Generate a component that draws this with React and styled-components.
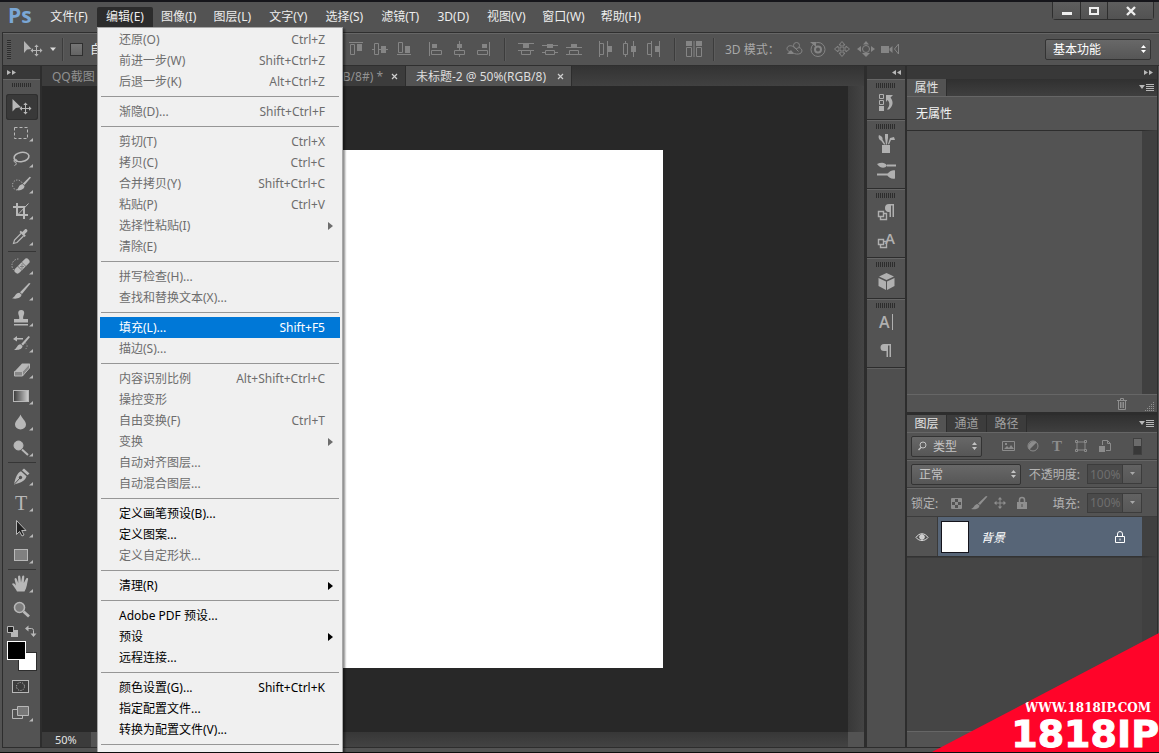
import React from "react";
import styled, { createGlobalStyle, css } from "styled-components";

const GlobalStyle = createGlobalStyle`
  * {
    box-sizing: border-box;
  }

  body {
    margin: 0;
    background: #535353;
  }

  body, button, input, select {
    font-family: "Noto Sans", "Noto Sans CJK SC", sans-serif;
    font-size: 12px;
  }

  button {
    margin: 0;
    padding: 0;
    border: none;
    background: none;
    color: inherit;
  }
`;

const Window = styled.div`
  position: relative;
  display: flex;
  flex-direction: column;
  height: 100vh;
  overflow: hidden;
  color: #dcdcdc;
  background: #535353;
  border-top: 2px solid #15151a;
  border-bottom: 1px solid #0c0c0c;
`;

/* ---------- title bar ---------- */

const TitleBar = styled.header`
  display: flex;
  align-items: flex-start;
  height: 30px;
`;

const Logo = styled.div`
  width: 41px;
  padding-left: 8px;
  font-family: "Open Sans", sans-serif;
  font-size: 21px;
  font-weight: 700;
  line-height: 27px;
  color: #7ba7d6;
`;

const MenuBar = styled.nav`
  display: flex;
  padding-top: 5px;
`;

const MenuSlot = styled.div`
  position: relative;
`;

const MenuButton = styled.button`
  display: block;
  min-width: ${({ $slim }) => ($slim ? "50px" : "56px")};
  height: 20px;
  padding: 0 8px;
  line-height: 18px;
  color: #ededed;
  white-space: nowrap;
  background: ${({ $open }) => ($open ? "#2c2c2c" : "none")};
  border-radius: 2px 2px 0 0;
`;

const WindowControls = styled.div`
  display: flex;
  margin: 0 5px 0 auto;
  border: 1px solid #2e2e2e;
  border-top: none;
  border-radius: 0 0 4px 4px;
`;

const WindowButton = styled.button`
  display: flex;
  align-items: center;
  justify-content: center;
  width: ${({ $wide }) => ($wide ? "46px" : "27px")};
  height: 17px;
  background: linear-gradient(#5e5e5e, #525252);

  & + & {
    border-left: 1px solid #2e2e2e;
  }
`;

/* ---------- drop-down menu ---------- */

const Menu = styled.div`
  position: absolute;
  z-index: 5;
  top: 20px;
  left: 0;
  width: 246px;
  padding: 1px 2px 24px;
  background: #f0f0f0;
  border: 1px solid #a8a8a8;
  box-shadow: 2px 2px 2px rgba(0, 0, 0, 0.45);
`;

const MenuItem = styled.button`
  display: flex;
  align-items: center;
  justify-content: space-between;
  width: 100%;
  height: 21px;
  padding: 0 15px 0 19px;
  line-height: 20px;
  text-align: left;
  white-space: nowrap;
  color: #000;

  &:disabled {
    color: #6d6d6d;
  }

  ${({ $selected }) =>
    $selected &&
    css`
      color: #fff;
      background: #0078d7;
    `}
`;

const Submenu = styled.span`
  width: 0;
  height: 0;
  margin-right: -8px;
  border: 4px solid transparent;
  border-left: 5px solid currentColor;
  border-right: none;
`;

const MenuLine = styled.hr`
  height: 1px;
  margin: 4px 1px;
  border: none;
  background: #969696;
`;

/* ---------- options bar ---------- */

const OptionsBar = styled.div`
  display: flex;
  align-items: center;
  gap: 11px;
  height: 34px;
  margin-left: 2px;
  padding-right: 8px;
  border: 1px solid #2f2f2f;
  border-right: none;
  box-shadow: inset 0 1px #666;
`;

const ToolOptions = styled.div`
  display: flex;
  align-items: center;
  width: 332px;
  padding-left: 4px;
  white-space: nowrap;
`;

const SideGrip = styled.span`
  width: 4px;
  height: 19px;
  margin-right: 13px;
  background: repeating-linear-gradient(#2d2d2d 0 1px, #5a5a5a 1px 2px);
`;

const Divider = styled.span`
  width: 1px;
  height: 23px;
  background: #3c3c3c;
  box-shadow: 1px 0 #5c5c5c;
`;

const CheckLabel = styled.label`
  display: flex;
  align-items: center;
  gap: 7px;
  margin-left: 7px;
  color: #ededed;
`;

const Check = styled.input`
  appearance: none;
  width: 13px;
  height: 13px;
  margin: 0;
  border: 1px solid #2f2f2f;
  background: linear-gradient(#757575, #646464);
`;

const IconSet = styled.div`
  display: flex;
  gap: 4px;
  color: #858585;
`;

const IconButton = styled.button`
  display: flex;
  align-items: center;
  justify-content: center;
`;

const ModeLabel = styled.span`
  width: 48px;
  color: #a8a8a8;
  white-space: nowrap;
`;

const SelectBox = styled.span`
  position: relative;
  display: inline-flex;
  width: ${({ $width }) => $width}px;
  margin-left: ${({ $end }) => ($end ? "auto" : 0)};
  color: ${({ $bright }) => ($bright ? "#fff" : "#c4c4c4")};

  svg {
    position: absolute;
    top: 50%;
    transform: translateY(-50%);
    pointer-events: none;
  }

  svg:last-child {
    right: 4px;
  }
`;

const Select = styled.select`
  appearance: none;
  width: 100%;
  height: 21px;
  padding: 0 14px 0 ${({ $indent }) => $indent || 7}px;
  color: inherit;
  background: linear-gradient(#686868, #565656);
  border: 1px solid #333;
  border-radius: 2px;
`;

/* ---------- workspace ---------- */

const Workspace = styled.main`
  display: flex;
  flex: 1;
  min-height: 0;
  margin: 0 1px 0 2px;
  background: #2d2d2d;
  border-left: 1px solid #2d2d2d;
  border-right: 1px solid #2d2d2d;
  border-bottom: 1px solid #2d2d2d;
`;

const Frame = styled.div`
  height: 4px;
  background: #535353;
`;

const Collapser = styled.div`
  display: flex;
  align-items: center;
  justify-content: ${({ $left }) => ($left ? "flex-start" : "flex-end")};
  height: 13px;
  padding: 0 4px;
  color: #b8b8b8;
  background: #383838;
`;

const Tools = styled.aside`
  display: flex;
  flex-direction: column;
  width: 37px;
  margin-right: 2px;
`;

const ToolList = styled.div`
  display: flex;
  flex: 1;
  flex-direction: column;
  align-items: center;
  color: #b8b8b8;
  background: #535353;
  border-top: 1px solid #666;
`;

const TopGrip = styled.span`
  width: 20px;
  height: 4px;
  background: repeating-linear-gradient(90deg, #2d2d2d 0 1px, #535353 1px 2px);
`;

const ToolGrip = styled(TopGrip)`
  margin: 3px 0 7px;
`;

const ToolButton = styled.button`
  position: relative;
  width: 32px;
  height: 26px;

  svg {
    display: block;
  }

  ${({ $active }) =>
    $active &&
    css`
      background: #393939;
      border-radius: 3px;
      box-shadow: inset 0 0 0 1px #2f2f2f;
    `}
`;

const ToolLine = styled.hr`
  width: 28px;
  height: 1px;
  margin: 1px 0;
  border: none;
  background: #363636;
`;

const SwatchTools = styled.div`
  display: flex;
  justify-content: space-between;
  width: 30px;
  height: 14px;
  padding-top: 2px;
`;

const Swatches = styled.div`
  position: relative;
  width: 30px;
  height: 30px;
  margin: 4px 0 3px;
`;

const Swatch = styled.button`
  position: absolute;
  width: 19px;
  height: 19px;
  border: 1px solid #2d2d2d;

  &:first-child {
    right: 0;
    bottom: 0;
    background: #fff;
  }

  &:last-child {
    top: 0;
    left: 0;
    background: #000;
    border-color: #fff;
  }
`;

const Document = styled.section`
  display: flex;
  flex: 1;
  flex-direction: column;
  min-width: 0;
`;

const Tabs = styled.div`
  display: flex;
  height: 20px;
  background: linear-gradient(#333, #414141);
`;

const Tab = styled.button`
  display: flex;
  align-items: center;
  justify-content: space-between;
  width: ${({ $active }) => ($active ? "166px" : "364px")};
  padding: 0 7px 0 10px;
  color: ${({ $active }) => ($active ? "#dedede" : "#919191")};
  background: ${({ $active }) => ($active ? "#535353" : "#3c3c3c")};
  border-right: 1px solid #2d2d2d;
  white-space: nowrap;
`;

const TabEnd = styled.span`
  display: flex;
  align-items: center;
  gap: 8px;
`;

const Stage = styled.div`
  display: grid;
  flex: 1;
  grid-template: minmax(0, 1fr) 15px / minmax(0, 1fr) 16px;
  background: #282828;
`;

const Viewport = styled.div`
  display: flex;
  align-items: center;
  justify-content: center;
`;

const Paper = styled.div`
  width: 436px;
  height: 518px;
  background: #fff;
`;

const ScrollTrack = styled.div`
  background: linear-gradient(90deg, #383838, #444);
`;

const StatusBar = styled.footer`
  display: flex;
  background: linear-gradient(#373737, #434343);
`;

const ZoomLevel = styled.input`
  width: 49px;
  padding: 0 0 0 13px;
  color: #e4e4e4;
  font-size: 11px;
  background: #3b3b3b;
  border: none;
`;

const StatusInfo = styled.div`
  width: 230px;
  background: #535353;
`;

const Corner = styled.div`
  background: #535353;
`;

/* ---------- icon dock ---------- */

const Dock = styled.aside`
  display: flex;
  flex-direction: column;
  width: 38px;
  margin: 0 2px 0 3px;
`;

const DockGroup = styled.div`
  display: flex;
  flex-direction: column;
  align-items: center;
  padding: 3px 0;
  color: #b0b0b0;
  background: #535353;
  border-top: 1px solid #666;
  border-bottom: 1px solid #2d2d2d;
`;

const DockGrip = styled(TopGrip)`
  height: 5px;
`;

const DockButton = styled(IconButton)`
  width: 30px;
  height: 28px;
`;

const DockRest = styled.div`
  flex: 1;
  background: #4f4f4f;
  border-top: 1px solid #606060;
`;

/* ---------- panels ---------- */

const Panels = styled.aside`
  display: flex;
  flex-direction: column;
  width: 250px;
`;

const Panel = styled.section`
  display: flex;
  flex-direction: column;
  flex: ${({ $grow }) => ($grow ? "1" : "0 0 auto")};
  margin-bottom: ${({ $grow }) => ($grow ? 0 : "3px")};
  min-height: 0;
`;

const PanelTabs = styled.div`
  display: flex;
  align-items: stretch;
  height: 17px;
  background: linear-gradient(#303030, #3f3f3f);
`;

const PanelTab = styled.button`
  width: 40px;
  height: 18px;
  line-height: 16px;
  color: ${({ $active }) => ($active ? "#e4e4e4" : "#a0a0a0")};
  background: ${({ $active }) => ($active ? "#535353" : "#3c3c3c")};
  border-right: 1px solid #2d2d2d;
`;

const PanelMenu = styled(IconButton)`
  margin: 0 3px 0 auto;
  color: #b8b8b8;
`;

const PanelMessage = styled.p`
  height: 34px;
  margin: 0;
  padding-left: 9px;
  line-height: 34px;
  color: #f4f4f4;
  background: #535353;
  border-top: 1px solid #666;
`;

const ScrollBody = styled.div`
  flex: ${({ $height }) => ($height ? "none" : "1")};
  height: ${({ $height }) => ($height ? `${$height}px` : "auto")};
  background: ${({ $height }) => ($height ? "#535353" : "#454545")};
  border-top: 1px solid ${({ $height }) => ($height ? "#2d2d2d" : "#3a3a3a")};
  border-right: 15px solid #404040;
`;

const PanelFooter = styled.div`
  display: flex;
  align-items: center;
  justify-content: flex-end;
  gap: 15px;
  height: ${({ $short }) => ($short ? "16px" : "18px")};
  padding-right: 2px;
  color: #8f8f8f;
  background: #535353;
  border-top: 1px solid #666;
`;

const ControlRow = styled.div`
  display: flex;
  align-items: center;
  height: ${({ $last }) => ($last ? "29px" : "28px")};
  padding: 0 15px 0 4px;
  color: #b4b4b4;
  background: #535353;
  border-top: 1px solid #666;
  border-bottom: 1px solid #3c3c3c;
  white-space: nowrap;
`;

const FilterIcons = styled.div`
  display: flex;
  gap: 8px;
  margin-left: 19px;
  color: #8c8c8c;
`;

const FilterSwitch = styled.button`
  width: 9px;
  height: 17px;
  margin: 0 0 0 auto;
  background: linear-gradient(#6b6b6b 0 7px, #383838 7px);
  border: 1px solid #404040;
`;

const AmountLabel = styled.label`
  display: flex;
  align-items: center;
  gap: 7px;
  margin-left: auto;
`;

const Amount = styled.input`
  width: 36px;
  height: 20px;
  padding: 0 0 0 2px;
  color: #6e6e6e;
  background: #4a4a4a;
  border: 1px solid #3c3c3c;
`;

const AmountArrow = styled(IconButton)`
  width: 19px;
  height: 20px;
  color: #a8a8a8;
  background: linear-gradient(#626262, #575757);
  border: 1px solid #3c3c3c;
  border-left: none;
`;

const LockIcons = styled.div`
  display: flex;
  gap: 4px;
  margin-left: 8px;
  color: #8f8f8f;
`;

const Layer = styled.div`
  display: flex;
  height: 40px;
  background: #535353;
  border-right: 15px solid #404040;
  border-bottom: 1px solid #333;
`;

const Eye = styled(IconButton)`
  width: 31px;
  border-right: 1px solid #3a3a3a;
`;

const LayerBody = styled.div`
  display: flex;
  flex: 1;
  align-items: center;
  padding: 0 16px 0 3px;
  color: #fff;
  background: #576577;
`;

const Thumb = styled.span`
  width: 28px;
  height: 32px;
  margin-right: 12px;
  background: #fff;
  border: 1px solid #14141c;
`;

const LayerName = styled.span`
  flex: 1;
  font-style: italic;
`;

/* ---------- corner ribbon ---------- */

const Ribbon = styled.a`
  position: absolute;
  z-index: 6;
  right: 0;
  bottom: -1px;
  display: flex;
  flex-direction: column;
  align-items: flex-end;
  justify-content: flex-end;
  width: 229px;
  height: 120px;
  color: #fff;
  text-decoration: none;
  background: #ff0429;
  clip-path: polygon(100% 0, 100% 100%, 0 100%);
`;

const RibbonSite = styled.span`
  padding-right: 8px;
  font-family: "DejaVu Serif", serif;
  font-size: 12px;
  font-weight: 700;
  line-height: 14px;
`;

const RibbonName = styled.span`
  font-family: "DejaVu Sans", sans-serif;
  font-size: 38px;
  font-weight: 700;
  line-height: 38px;
  -webkit-text-stroke: 1px #fff;
`;

/* ---------- icons ---------- */

const Svg = ({ w = 20, h = w, children }) => (
  <svg width={w} height={h} viewBox={`0 0 ${w} ${h}`} fill="none" stroke="currentColor" aria-hidden="true">
    {children}
  </svg>
);

const Solid = (props) => <path fill="currentColor" stroke="none" {...props} />;

const Cross = ({ x, y }) => (
  <g transform={`translate(${x} ${y})`}>
    <path d="M-4 0H4M0-4V4" />
    <Solid d="M0-6l2.2 2.5h-4.4zM0 6l2.2-2.5h-4.4zM-6 0l2.5-2.2v4.4zM6 0l-2.5-2.2v4.4z" />
  </g>
);

const MoveIcon = () => (
  <>
    <Solid d="M6.5 5v12.5l3.4-3.6 5.1-.6z" />
    <Cross x={19.5} y={14.5} />
  </>
);

const toolGroups = [
  [
    { name: "移动工具", single: true, icon: <MoveIcon /> },
    { name: "矩形选框工具", icon: <rect x="8.5" y="7.5" width="13" height="11" strokeDasharray="3 2" /> },
    {
      name: "套索工具",
      icon: (
        <>
          <ellipse cx="15.5" cy="11" rx="7.5" ry="4.6" strokeWidth="1.6" transform="rotate(-10 15.5 11)" />
          <circle cx="9.5" cy="14.8" r="1.5" />
          <path d="M9.5 16.5c1.5 1 .5 2.5-1 3" />
        </>
      ),
    },
    {
      name: "快速选择工具",
      icon: (
        <>
          <circle cx="11.5" cy="13" r="5" strokeDasharray="1.2 1.5" />
          <Solid d="M25 5.5l-6.5 7.5-1.8-1.3 7-7zM16 12.200l2.500 1.600c0 3.500-4 5.200-8 4.200 2-1.200 2-5 5.500-5.800z" />
        </>
      ),
    },
    {
      name: "裁剪工具",
      icon: (
        <>
          <path d="M11 5v12h11M7 9h11v12" strokeWidth="2" />
          <path d="M12 16.5L22.5 5.5" />
        </>
      ),
    },
    {
      name: "吸管工具",
      icon: (
        <>
          <path d="M15 9.5l-6.5 6.5-1 3.5 3.5-1 6.5-6.5" strokeWidth="1.2" />
          <Solid d="M13.5 8l1.3-1.3 1.5 1.2 2.5-2.5c1.5-1.2 3.5.8 2.3 2.3l-2.5 2.5 1.2 1.5-1.3 1.3z" />
        </>
      ),
    },
  ],
  [
    {
      name: "污点修复画笔工具",
      icon: (
        <>
          <path d="M10 18.5a6.5 6.5 0 013-12.5" strokeDasharray="1.2 1.5" />
          <path d="M11.5 17.5L20.500 8.500" strokeWidth="6" strokeLinecap="round" />
          <path d="M11.5 13l5 5M15.500 9l5 5" stroke="#666" strokeWidth="0.8" />
          <path d="M14.500 13.500h1M16.500 13.500h1M15.500 12h1M15.500 15h1" stroke="#444" />
        </>
      ),
    },
    {
      name: "画笔工具",
      icon: <Solid d="M24.5 4.5L16 15l-2-1.7L23 4zM13.3 13.8l2.200 1.800c0 3.500-5 4.700-9.500 3.700 3-.8 3.300-5.500 7.300-5.500z" />,
    },
    {
      name: "仿制图章工具",
      icon: <Solid d="M12.2 8a3 3 0 116 0c0 2-1.5 3-1 6H22v3.5H8V14h5.2c.5-3-1-4-1-6zM8 19h14v1.5H8z" />,
    },
    {
      name: "历史记录画笔工具",
      icon: (
        <>
          <Solid d="M24 6l-7 8.5-1.8-1.5L22.5 5zM14.5 13.3l2 1.700c0 3-4 4.500-8.500 3.700 3-1 3-5 6.500-5.400zM7 8l4-3v2h6v1.500h-6v2z" />
          <path d="M19.500 12c2.500 2 2 5-1 7" strokeDasharray="1 2" />
        </>
      ),
    },
    {
      name: "橡皮擦工具",
      icon: (
        <>
          <Solid d="M8.5 14.5L16 6.5h8l-7 8z" />
          <path d="M8.5 14.5h8V19h-8zM16.5 14.5L23.5 7v4l-7 8z" fill="#888" />
        </>
      ),
    },
    {
      name: "渐变工具",
      icon: (
        <>
          <defs>
            <linearGradient id="tool-ramp">
              <stop offset="0" stopColor="#3a3a3a" />
              <stop offset="1" stopColor="#d0d0d0" />
            </linearGradient>
          </defs>
          <rect x="7.5" y="7.5" width="15" height="11" fill="url(#tool-ramp)" />
        </>
      ),
    },
    { name: "模糊工具", icon: <Solid d="M14.500 5.500c1.500 4 5.500 6.500 5.500 10a5.500 5 0 01-11 0c0-3.500 4-6 5.500-10z" /> },
    {
      name: "减淡工具",
      icon: (
        <>
          <circle cx="12.5" cy="10.5" r="4.5" fill="currentColor" />
          <path d="M16 14.5l6 5.5" strokeWidth="2" />
        </>
      ),
    },
  ],
  [
    {
      name: "钢笔工具",
      icon: (
        <>
          <Solid d="M18 4.5l5.5 5-2 1.8-5.5-5zM15 7.2l5.5 5c-1 4-5 6.5-12.500 8.300 1.500-7 3-11.500 7-13.300z" />
          <path d="M8.5 20l5.5-6" stroke="#535353" />
          <circle cx="14.5" cy="13.5" r="1.2" fill="#535353" stroke="#444" />
        </>
      ),
    },
    {
      name: "横排文字工具",
      icon: (
        <text x="15" y="20" textAnchor="middle" fill="currentColor" stroke="none" fontFamily="Liberation Serif" fontSize="20">
          T
        </text>
      ),
    },
    { name: "路径选择工具", icon: <path d="M10.5 4.5v14l3-3 2.5 4.5 2-1-2.300-4.500h4.300z" fill="#222" /> },
    { name: "矩形工具", icon: <rect x="8.5" y="7.5" width="13" height="11" fill="#808080" /> },
  ],
  [
    {
      name: "抓手工具",
      icon: (
        <Solid d="M11 20.5c-1-2.500-3-4.500-5-7.500 1-1.500 2.500-.5 4 1.500L8.500 8c.5-1.500 1.800-1.200 2.200 0l1.600 4L12 5.500c.5-1.300 2-1.300 2.300 0l.7 6 1.200-6.300c.6-1.200 2-.8 2.100.4L17.800 12l2.400-4.500c.9-1 2.100-.3 1.900.8C21 12 21 17 18.500 20.500z" />
      ),
    },
    {
      name: "缩放工具",
      single: true,
      icon: (
        <>
          <circle cx="13.5" cy="10.5" r="5" fill="#7c7c7c" strokeWidth="1.6" />
          <path d="M17.5 14.5l5.5 5" strokeWidth="2.8" />
        </>
      ),
    },
  ],
];

const Fly = () => <Solid d="M27 18v3.500h-4z" />;

const MenuGlyph = () => (
  <Svg w={15} h={12}>
    <Solid d="M0 3h6l-3 4z" />
    <path d="M7 2.5h8M7 4.5h8M7 6.5h8M7 8.5h8" />
  </Svg>
);

const Updown = () => (
  <Svg w={7} h={10}>
    <Solid d="M1 4l2.500-3L6 4zM1 6l2.500 3L6 6z" />
  </Svg>
);

const Chevrons = ({ back }) => (
  <Svg w={9} h={7}>
    <Solid d={back ? "M4 1v5L0 3.5zM9 1v5L5 3.5z" : "M0 1v5l4-2.500zM5 1v5l4-2.500z"} />
  </Svg>
);

const Close = () => (
  <Svg w={7}>
    <path d="M1 1l5 5M6 1L1 6" stroke="#cfcfcf" strokeWidth="1.2" />
  </Svg>
);

const Padlock = () => (
  <Svg w={12} h={14}>
    <path d="M3.5 6V4a2.5 2.500 0 015 0v2M1.500 6.500h9v6h-9z" />
    <path d="M6 8.5v2" />
  </Svg>
);

/* filled (f) and outlined (o) boxes with guide lines (l) */
const alignSets = [
  [
    { name: "顶对齐", l: "M3 3.5h14", f: "M11 5h5v7h-5z", o: "M4.5 5.5h4v10h-4z" },
    { name: "垂直居中对齐", l: "M2 10.5h2M9 10.5h9", f: "M11 7h5v7h-5z", o: "M4.5 4.5h4v11h-4z" },
    { name: "底对齐", l: "M3 15.5h14", f: "M11 7h5v7h-5z", o: "M4.5 3.5h4v10h-4z" },
  ],
  [
    { name: "左对齐", l: "M4.5 3v14", f: "M7 5h5v4H7z", o: "M6.5 11.5h10v4h-10z" },
    { name: "水平居中对齐", l: "M10.5 2v9M10.5 15v3", f: "M8 5h5v4H8z", o: "M5.5 11.5h10v4h-10z" },
    { name: "右对齐", l: "M16.5 3v14", f: "M9 5h5v4H9z", o: "M4.5 11.5h10v4h-10z" },
  ],
  [
    { name: "按顶分布", l: "M2 4.5h16M2 11.5h16", f: "M7 5h6v4H7z", o: "M5.5 11.5h9v4h-9z" },
    { name: "垂直居中分布", l: "M2 6.5h16M2 13.5h3M15 13.5h3", f: "M7 5h6v4H7z", o: "M5.5 11.5h9v4h-9z" },
    { name: "按底分布", l: "M2 8.5h16M2 15.5h16", f: "M7 5h6v4H7z", o: "M5.5 11.5h9v4h-9z" },
  ],
  [
    { name: "按左分布", l: "M4.5 2v16M12.5 2v16", f: "M13 7h4v6h-4z", o: "M4.5 4.5h4v11h-4z" },
    { name: "水平居中分布", l: "M6.5 2v3M6.5 15v3M14.5 2v16", f: "M12 7h5v6h-5z", o: "M4.5 4.5h4v11h-4z" },
    { name: "按右分布", l: "M8.5 2v16M16.5 2v16", f: "M12 7h4v6h-4z", o: "M4.5 4.5h4v11h-4z" },
  ],
];

const modes3d = [
  {
    name: "旋转",
    icon: (
      <>
        <path d="M8 12.500c-4 .5-6-2-4.500-4.500 1.500-2 5-1.500 7 .5l4 4" />
        <circle cx="12.500" cy="6.500" r="3" />
        <path d="M15 8.500c4 1 4 6-.5 6.500-3 .3-5-.5-6.500-2" />
        <Solid d="M3 15h7l-3-4z" />
      </>
    ),
  },
  {
    name: "滚动",
    icon: (
      <>
        <circle cx="10" cy="10.500" r="7" />
        <circle cx="10" cy="10.500" r="3" strokeWidth="2" />
        <Solid d="M2 3h6v5z" />
      </>
    ),
  },
  { name: "拖动", icon: <path d="M10 2.500l3 3.500h-2v3h3V7l3.500 3-3.500 3v-2h-3v3h2l-3 3.500L7 14h2v-3H6v2l-3.500-3L6 7v2h3V6H7z" /> },
  {
    name: "滑动",
    icon: (
      <>
        <circle cx="10" cy="10" r="3.500" />
        <Solid d="M10 2l3 3.500H7zM10 18l4-4H6zM1 10l4-3v6zM19 10l-4-3v6z" />
      </>
    ),
  },
  {
    name: "缩放",
    icon: (
      <>
        <Solid d="M1 7h8v7H1zM9.500 9.500l3-2.500v7l-3-2.500z" />
        <path d="M18.500 5L14.500 10l4 5z" />
      </>
    ),
  },
];

const dockGroups = [
  [
    {
      name: "历史记录",
      icon: (
        <>
          <path d="M3.500 2.500h4v4h-4zM3.500 8.500h4v4h-4z" />
          <Solid d="M3 14h5v5H3zM10 3h7l-2.500 2.500c3 4 3 8-1.500 12h-2c3-4 3-7 .5-9.500L10 10z" />
        </>
      ),
    },
  ],
  [
    {
      name: "画笔预设",
      icon: <Solid d="M6 12h8v8H6zM3 2c3 1 4 3 3.500 4.500l3 5H8L5 7.500C3 7 2 4 3 2zM9 1h3v4l-1 6.500h-1L9 5zM12 11l2-6 4-1 1 3-4 0-2 4.500z" />,
    },
    {
      name: "画笔",
      icon: (
        <>
          <Solid d="M1 3c4-2 8-2 10 1.500-2 3-6 3.500-10-1.500zM11 13.500c2-4 7-5 8-4v8c-3 1-7-1-8-4z" />
          <path d="M11 4.500h9M1 13.500h11" strokeWidth="2" />
        </>
      ),
    },
  ],
  [
    {
      name: "段落样式",
      icon: (
        <>
          <path d="M2.500 9.500h5v5h-5zM4.500 14.500v3h6v-6h-3" strokeWidth="1.400" />
          <Solid d="M13 2h5v13h-1.500V3.500H15V15h-1.500v-5H12a4 4 0 01-3-4 4 4 0 014-4z" />
        </>
      ),
    },
    {
      name: "字符样式",
      icon: (
        <>
          <path d="M2.500 9.500h5v5h-5zM4.500 14.500v3h6v-6h-3" strokeWidth="1.400" />
          <text x="9" y="14" fill="currentColor" stroke="none" fontFamily="Open Sans" fontSize="15" fontWeight="600">
            A
          </text>
        </>
      ),
    },
  ],
  [{ name: "3D", icon: <Solid d="M10.500 2L18 5.500 10.500 9 3 5.500zM2.500 7l7.500 3.500V19l-7.500-4zM18.500 7L11 10.500V19l7.500-4z" /> }],
  [
    {
      name: "字符",
      icon: (
        <>
          <text x="3" y="16" fill="currentColor" stroke="none" fontFamily="Open Sans" fontSize="16" fontWeight="600">
            A
          </text>
          <path d="M16.500 2v16" />
        </>
      ),
    },
    { name: "段落", icon: <Solid d="M8 4h7v13h-1.500V5.500H12V17h-1.500v-6H8a3.500 3.500 0 010-7z" /> },
  ],
];

const layerFilters = [
  {
    name: "像素图层",
    icon: (
      <>
        <path d="M1.500 3.500h12v9h-12z" />
        <Solid d="M3 11l3-3 2 2 2-3 3 4zM4 5h2v2H4z" />
      </>
    ),
  },
  {
    name: "调整图层",
    icon: (
      <>
        <circle cx="8" cy="8" r="5" />
        <Solid d="M4.500 11.500a5 5 0 017-7z" />
      </>
    ),
  },
  {
    name: "文字图层",
    icon: (
      <text x="8" y="13" textAnchor="middle" fill="currentColor" stroke="none" fontFamily="Liberation Serif" fontSize="15" fontWeight="700">
        T
      </text>
    ),
  },
  { name: "形状图层", icon: <path d="M4 4h8v8H4zM2.500 2.500h2v2h-2zM11.500 2.500h2v2h-2zM2.500 11.500h2v2h-2zM11.500 11.500h2v2h-2z" /> },
  {
    name: "智能对象",
    icon: (
      <>
        <path d="M5.500 7V2.500h5l3 3v7H9M10.500 2.500v3h3" />
        <Solid d="M2 8h6v6H2z" />
      </>
    ),
  },
];

/* ---------- content ---------- */

const menus = ["文件(F)", "编辑(E)", "图像(I)", "图层(L)", "文字(Y)", "选择(S)", "滤镜(T)", "3D(D)", "视图(V)", "窗口(W)", "帮助(H)"];

const slimMenus = ["图像(I)", "3D(D)"];

const editMenu = [
  [
    { label: "还原(O)", keys: "Ctrl+Z", off: true },
    { label: "前进一步(W)", keys: "Shift+Ctrl+Z", off: true },
    { label: "后退一步(K)", keys: "Alt+Ctrl+Z", off: true },
  ],
  [{ label: "渐隐(D)...", keys: "Shift+Ctrl+F", off: true }],
  [
    { label: "剪切(T)", keys: "Ctrl+X", off: true },
    { label: "拷贝(C)", keys: "Ctrl+C", off: true },
    { label: "合并拷贝(Y)", keys: "Shift+Ctrl+C", off: true },
    { label: "粘贴(P)", keys: "Ctrl+V", off: true },
    { label: "选择性粘贴(I)", sub: true, off: true },
    { label: "清除(E)", off: true },
  ],
  [
    { label: "拼写检查(H)...", off: true },
    { label: "查找和替换文本(X)...", off: true },
  ],
  [
    { label: "填充(L)...", keys: "Shift+F5", selected: true },
    { label: "描边(S)...", off: true },
  ],
  [
    { label: "内容识别比例", keys: "Alt+Shift+Ctrl+C", off: true },
    { label: "操控变形", off: true },
    { label: "自由变换(F)", keys: "Ctrl+T", off: true },
    { label: "变换", sub: true, off: true },
    { label: "自动对齐图层...", off: true },
    { label: "自动混合图层...", off: true },
  ],
  [{ label: "定义画笔预设(B)..." }, { label: "定义图案..." }, { label: "定义自定形状...", off: true }],
  [{ label: "清理(R)", sub: true }],
  [{ label: "Adobe PDF 预设..." }, { label: "预设", sub: true }, { label: "远程连接..." }],
  [{ label: "颜色设置(G)...", keys: "Shift+Ctrl+K" }, { label: "指定配置文件..." }, { label: "转换为配置文件(V)..." }],
];

const EditMenu = () => (
  <Menu role="menu">
    {editMenu.map((group) => (
      <React.Fragment key={group[0].label}>
        {group.map((item) => (
          <MenuItem key={item.label} role="menuitem" disabled={item.off} $selected={item.selected}>
            <span>{item.label}</span>
            {item.keys && <span>{item.keys}</span>}
            {item.sub && <Submenu />}
          </MenuItem>
        ))}
        <MenuLine />
      </React.Fragment>
    ))}
  </Menu>
);

const Header = () => (
  <TitleBar>
    <Logo>Ps</Logo>
    <MenuBar>
      {menus.map((label) => {
        const open = label === "编辑(E)";
        return (
          <MenuSlot key={label}>
            <MenuButton $open={open} $slim={slimMenus.includes(label)} aria-expanded={open}>
              {label}
            </MenuButton>
            {open && <EditMenu />}
          </MenuSlot>
        );
      })}
    </MenuBar>
    <WindowControls>
      <WindowButton aria-label="最小化">
        <Svg w={12}>
          <path d="M1 8.500h10" stroke="#eee" strokeWidth="3" />
        </Svg>
      </WindowButton>
      <WindowButton aria-label="最大化">
        <Svg w={12}>
          <path d="M2 3h8v6H2z" stroke="#eee" strokeWidth="2" />
        </Svg>
      </WindowButton>
      <WindowButton $wide aria-label="关闭">
        <Svg w={12}>
          <path d="M2 2l8 8M10 2l-8 8" stroke="#eee" strokeWidth="2.400" />
        </Svg>
      </WindowButton>
    </WindowControls>
  </TitleBar>
);

const Options = () => (
  <OptionsBar>
    <ToolOptions>
      <SideGrip />
      <Svg w={38} h={22}>
        <g color="#b4b4b4" stroke="currentColor">
          <Solid d="M0 3v12l3-3.500 4.500-.5z" />
          <Cross x={12.5} y={12.5} />
        </g>
        <Solid d="M26 9.500h6l-3 3.500z" />
      </Svg>
      <Divider />
      <CheckLabel>
        <Check type="checkbox" />
        自动选择:
      </CheckLabel>
    </ToolOptions>
    {alignSets.map((set, i) => (
      <React.Fragment key={set[0].name}>
        {i === 2 && <Divider />}
        <IconSet>
          {set.map(({ name, l, f, o }) => (
            <IconButton key={name} aria-label={name}>
              <Svg>
                <path d={l} />
                <Solid d={f} />
                <path d={o} fill="#535353" />
              </Svg>
            </IconButton>
          ))}
        </IconSet>
      </React.Fragment>
    ))}
    <Divider />
    <IconSet>
      <IconButton aria-label="自动对齐图层">
        <Svg w={16} h={20}>
          <Solid d="M0 2h6v5H0zM10 2h6v5h-6z" />
          <path d="M.5 8.500h5v9h-5zM10.500 8.500h5v9h-5zM8 2v16" />
        </Svg>
      </IconButton>
    </IconSet>
    <Divider />
    <ModeLabel>3D 模式：</ModeLabel>
    <IconSet>
      {modes3d.map(({ name, icon }) => (
        <IconButton key={name} aria-label={name}>
          <Svg>{icon}</Svg>
        </IconButton>
      ))}
    </IconSet>
    <SelectBox $width={106} $end $bright>
      <Select aria-label="工作区">
        <option>基本功能</option>
      </Select>
      <Updown />
    </SelectBox>
  </OptionsBar>
);

const Toolbox = () => (
  <Tools>
    <Collapser $left>
      <Chevrons />
    </Collapser>
    <ToolList>
      <ToolGrip />
      {toolGroups.map((group, i) => (
        <React.Fragment key={group[0].name}>
          {i > 0 && <ToolLine />}
          {group.map(({ name, icon, single }) => (
            <ToolButton key={name} aria-label={name} $active={name === "移动工具"}>
              <Svg w={32} h={26}>
                {icon}
                {!single && <Fly />}
              </Svg>
            </ToolButton>
          ))}
        </React.Fragment>
      ))}
      <SwatchTools>
        <IconButton aria-label="默认颜色">
          <Svg w={11}>
            <Solid d="M4 4h7v7H4z" />
            <path d="M.5.5h6v6h-6z" fill="#222" />
          </Svg>
        </IconButton>
        <IconButton aria-label="切换颜色">
          <Svg w={12}>
            <path d="M2 3.500h4.500a2 2 0 012 2V9" />
            <Solid d="M0 3.500l3.500-3v6zM8.500 12l-3-3.500h6z" />
          </Svg>
        </IconButton>
      </SwatchTools>
      <Swatches>
        <Swatch aria-label="背景色" />
        <Swatch aria-label="前景色" />
      </Swatches>
      <ToolButton aria-label="快速蒙版">
        <Svg w={32} h={26}>
          <rect x="6.5" y="6.5" width="16" height="12" fill="#3c3c3c" />
          <circle cx="14.5" cy="12.5" r="4" strokeDasharray="1.2 1.3" />
        </Svg>
      </ToolButton>
      <ToolButton aria-label="屏幕模式">
        <Svg w={32} h={26}>
          <path d="M6.5 9.5h10v9h-10z" />
          <path d="M11.5 6.5h11v9h-11z" fill="#777" />
          <Fly />
        </Svg>
      </ToolButton>
    </ToolList>
  </Tools>
);

const DocumentTabs = () => (
  <Tabs>
    <Tab>
      QQ截图
      <TabEnd>
        @ 50%(RGB/8#) * <Close />
      </TabEnd>
    </Tab>
    <Tab $active>
      未标题-2 @ 50%(RGB/8) <Close />
    </Tab>
  </Tabs>
);

const Editor = () => (
  <Document>
    <DocumentTabs />
    <Stage>
      <Viewport>
        <Paper />
      </Viewport>
      <ScrollTrack />
      <StatusBar>
        <ZoomLevel aria-label="缩放" defaultValue="50%" />
        <StatusInfo />
      </StatusBar>
      <Corner />
    </Stage>
  </Document>
);

const IconDock = () => (
  <Dock>
    <Collapser>
      <Chevrons back />
    </Collapser>
    {dockGroups.map((group) => (
      <DockGroup key={group[0].name}>
        <DockGrip />
        {group.map(({ name, icon }) => (
          <DockButton key={name} aria-label={name}>
            <Svg>{icon}</Svg>
          </DockButton>
        ))}
      </DockGroup>
    ))}
    <DockRest />
  </Dock>
);

const AmountField = ({ label }) => (
  <>
    <AmountLabel>
      {label}
      <Amount defaultValue="100%" />
    </AmountLabel>
    <AmountArrow aria-label={label}>
      <Svg w={7} h={4}>
        <Solid d="M1 0h5L3.500 3z" />
      </Svg>
    </AmountArrow>
  </>
);

const PropertiesPanel = () => (
  <Panel>
    <PanelTabs>
      <PanelTab $active>属性</PanelTab>
      <PanelMenu aria-label="面板菜单">
        <MenuGlyph />
      </PanelMenu>
    </PanelTabs>
    <PanelMessage>无属性</PanelMessage>
    <ScrollBody $height={264} />
    <PanelFooter>
      <Svg w={12} h={14}>
        <path d="M1 3.500h10M4.500 3V1.500h3V3M2.500 4v8.500h7V4M4.500 5v6M6 5v6M7.500 5v6" />
      </Svg>
      <Svg w={12} h={16}>
        <path d="M10 6.500h2M8 8.500h4M6 10.500h6M4 12.500h8M2 14.500h10" strokeDasharray="1 1" />
      </Svg>
    </PanelFooter>
  </Panel>
);

const LayersPanel = () => (
  <Panel $grow>
    <PanelTabs>
      <PanelTab $active>图层</PanelTab>
      <PanelTab>通道</PanelTab>
      <PanelTab>路径</PanelTab>
      <PanelMenu aria-label="面板菜单">
        <MenuGlyph />
      </PanelMenu>
    </PanelTabs>
    <ControlRow>
      <SelectBox $width={71}>
        <Select aria-label="滤镜类型" $indent={21}>
          <option>类型</option>
        </Select>
        <Svg w={18} h={12}>
          <circle cx="12" cy="5" r="3" />
          <path d="M10 7.500L7.500 10" strokeWidth="1.500" />
        </Svg>
        <Updown />
      </SelectBox>
      <FilterIcons>
        {layerFilters.map(({ name, icon }) => (
          <IconButton key={name} aria-label={name}>
            <Svg w={16}>{icon}</Svg>
          </IconButton>
        ))}
      </FilterIcons>
      <FilterSwitch aria-label="打开或关闭图层过滤" />
    </ControlRow>
    <ControlRow>
      <SelectBox $width={110}>
        <Select aria-label="混合模式">
          <option>正常</option>
        </Select>
        <Updown />
      </SelectBox>
      <AmountField label="不透明度:" />
    </ControlRow>
    <ControlRow $last>
      锁定:
      <LockIcons>
        <IconButton aria-label="锁定透明像素">
          <Svg w={20} h={16}>
            <path d="M5.500 3.500h10v10h-10z" />
            <Solid d="M6 4h3v3H6zM12 4h3v3h-3zM9 7h3v3H9zM6 10h3v3H6zM12 10h3v3h-3z" />
          </Svg>
        </IconButton>
        <IconButton aria-label="锁定图像像素">
          <Svg w={18} h={16}>
            <Solid d="M17.500 1.500L10 10 8 8.500 16 1zM7.500 9l2 1.500c0 3-4 4.500-8.500 3.500 3-.8 3-4.500 6.500-5z" />
          </Svg>
        </IconButton>
        <IconButton aria-label="锁定位置">
          <Svg w={16}>
            <Cross x={8} y={8} />
          </Svg>
        </IconButton>
        <IconButton aria-label="锁定全部">
          <Svg w={20} h={14}>
            <path d="M7.500 6V4a2.500 2.500 0 015 0v2" strokeWidth="1.500" />
            <Solid d="M5 6h10v7H5z" />
            <path d="M10 8v3" stroke="#535353" />
          </Svg>
        </IconButton>
      </LockIcons>
      <AmountField label="填充:" />
    </ControlRow>
    <Layer>
      <Eye aria-label="图层可见性">
        <Svg w={14} h={12}>
          <path d="M1 6.500c3-5 9-5 12 0-3 4-9 4-12 0z" />
          <circle cx="7" cy="6" r="2.300" fill="#ccc" />
        </Svg>
      </Eye>
      <LayerBody>
        <Thumb />
        <LayerName>背景</LayerName>
        <Padlock />
      </LayerBody>
    </Layer>
    <ScrollBody />
    <PanelFooter $short />
  </Panel>
);

export default function App() {
  return (
    <>
      <GlobalStyle />
      <Window>
        <Header />
        <Options />
        <Workspace>
          <Toolbox />
          <Editor />
          <IconDock />
          <Panels>
            <Collapser>
              <Chevrons />
            </Collapser>
            <PropertiesPanel />
            <LayersPanel />
          </Panels>
        </Workspace>
        <Frame />
        <Ribbon href="#1818ip">
          <RibbonSite>WWW.1818IP.COM</RibbonSite>
          <RibbonName>1818IP</RibbonName>
        </Ribbon>
      </Window>
    </>
  );
}
